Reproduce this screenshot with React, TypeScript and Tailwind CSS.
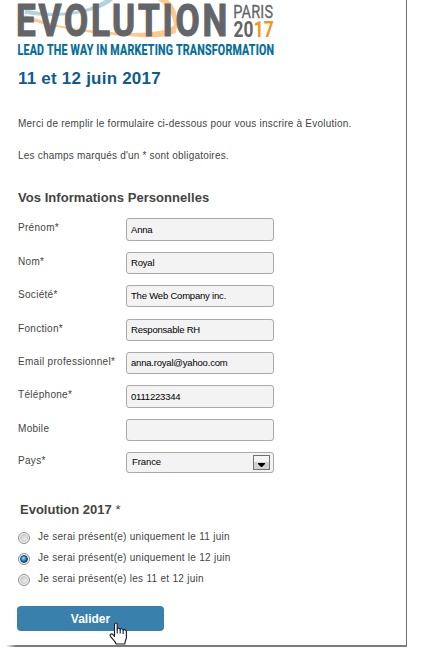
import React from 'react';

const fields = [
  { label: 'Prénom*', value: 'Anna', row: 'h-[34px]', box: 'h-[23px]' },
  { label: 'Nom*', value: 'Royal', row: 'h-[33px]', box: 'h-[22px]' },
  { label: 'Société*', value: 'The Web Company inc.', row: 'h-[34px]', box: 'h-[22px]' },
  { label: 'Fonction*', value: 'Responsable RH', row: 'h-[33px]', box: 'h-[22px]' },
  { label: 'Email professionnel*', value: 'anna.royal@yahoo.com', row: 'h-[33px]', box: 'h-[22px]' },
  { label: 'Téléphone*', value: '0111223344', row: 'h-[34px]', box: 'h-[23px]' },
  { label: 'Mobile', value: '', row: 'h-[33px]', box: 'h-[22px]' },
];

const options = [
  { text: 'Je serai présent(e) uniquement le 11 juin', checked: false },
  { text: 'Je serai présent(e) uniquement le 12 juin', checked: true },
  { text: 'Je serai présent(e) les 11 et 12 juin', checked: false },
];

function Logo() {
  return (
    <svg width="300" height="60" viewBox="0 0 300 60" className="block" fontFamily="'Roboto', 'Liberation Sans', sans-serif">
      <path d="M25 9 C50 16 85 14 105 0 L113 0 C108 5 97 10 86 12 C66 17 45 17 25 14 Z" fill="#b4d2e0" />
      <path
        d="M25 15 C45 22 62 27 84 29.5 C110 33 135 34 152 32 C162 31 170 29 174 25 C173 14 167 6 158 0 L168 0 C178 9 179 22 175.5 33 C165 38 150 38 135 36.5 C110 35 85 33 62 28 C48 25 35 22 25 20 Z"
        fill="#fdc88d"
      />
      <text
        transform="translate(16 36.4) scale(.78 1)"
        fontSize="45"
        fontWeight="700"
        fill="#636569"
        stroke="#636569"
        strokeWidth="1.2"
        textLength="271"
        lengthAdjust="spacing"
      >
        EVOLUTION
      </text>
      <text x="233.2" y="17.5" fontSize="18.5" fill="#636569" stroke="#636569" strokeWidth=".3" textLength="40" lengthAdjust="spacingAndGlyphs">PARIS</text>
      <text x="233.5" y="36.7" fontSize="21.5" fontWeight="700" fill="#636569" textLength="40.5" lengthAdjust="spacingAndGlyphs">
        20<tspan fill="#f7941e">17</tspan>
      </text>
      <text transform="translate(17.5 54.7) scale(.77 1)" fontSize="13.8" fontWeight="700" fill="#006c9b" stroke="#006c9b" strokeWidth=".25" textLength="333.5" lengthAdjust="spacing">
        LEAD THE WAY IN MARKETING TRANSFORMATION
      </text>
    </svg>
  );
}

function Radio({ checked }: { checked: boolean }) {
  return (
    <span className="flex size-3 shrink-0 items-center justify-center rounded-full border border-[#8e8f8f] bg-[#f4f4f4]">
      <span
        className={
          checked
            ? 'size-2 rounded-full border border-[#173f5c] bg-[radial-gradient(circle_at_40%_35%,#9be0f8,#1b82b8_50%,#0b3c61)]'
            : 'size-2 rounded-full border border-[#c3c5c9] bg-[linear-gradient(135deg,#c8cbd0,#f5f5f5)]'
        }
      />
    </span>
  );
}

function Cursor() {
  return (
    <svg className="absolute left-[92px] top-[16px]" width="19" height="23" viewBox="0 0 19 23">
      <path
        d="M5.5 14.5 V2.4 C5.5 .5 8.2 .5 8.2 2.4 V7.6 C8.2 5.8 11.2 5.8 11.2 7.8 C11.4 6.2 14.2 6.5 14.2 8.5 C14.6 7.1 17.4 7.6 17.4 9.6 V15.5 C17.4 17.6 15.8 18.6 15.8 22 H7.2 C6.6 19.4 4.3 18 1.5 14.4 C.2 12.5 2.3 11 3.9 12.5 Z"
        fill="#fff"
        stroke="#1c1c28"
        strokeWidth="1.15"
        strokeLinejoin="round"
      />
      <path d="M8.2 7.6V11.5M11.2 7.8V11.5M14.2 8.6V12" stroke="#1c1c28" strokeWidth="1.1" />
    </svg>
  );
}

export default function App() {
  return (
    <div className="h-[660px] w-[421px] overflow-hidden bg-white font-['Liberation_Sans',Arial,sans-serif] text-[10px] tracking-[0.23px] text-[#444]">
      <div className="relative h-[647px] w-[407px] border-r border-[#6f6f6f]">
        <Logo />
        <div className="pl-[18px]">
          <h1 className="mt-[9px] h-5 whitespace-nowrap text-[17px] font-bold leading-5 tracking-[0.22px] text-[#0f5a94]">11 et 12 juin 2017</h1>
          <p className="mt-[29px] whitespace-nowrap leading-3">
            Merci de remplir le formulaire ci-dessous pour vous inscrire à Evolution.
          </p>
          <p className="mt-5 whitespace-nowrap leading-3 tracking-[0.2px]">Les champs marqués d'un * sont obligatoires.</p>
          <h2 className="mt-[28px] h-4 whitespace-nowrap text-[13px] font-bold leading-4 tracking-[0.05px]">Vos Informations Personnelles</h2>

          <div className="mt-[12px]">
            {fields.map((f) => (
              <div key={f.label} className={`flex items-start ${f.row}`}>
                <label className="w-[108px] shrink-0 whitespace-nowrap pt-1 leading-3 tracking-[0.3px]">{f.label}</label>
                <div className={`flex w-[148px] items-center rounded-[3px] border border-[#a9a9a9] bg-[#f3f3f3] pl-1 pt-px text-[9.5px] tracking-[-0.2px] text-black ${f.box}`}>
                  <span className="whitespace-nowrap">{f.value}</span>
                </div>
              </div>
            ))}
            <div className="flex h-[50px] items-start">
              <label className="w-[108px] shrink-0 pt-[3px] leading-3 tracking-[0.3px]">Pays*</label>
              <div className="flex h-[21px] w-[148px] items-center justify-between rounded-[3px] border border-[#a9a9a9] bg-[#f3f3f3] pl-[5px] pr-[3px] text-[9.5px] tracking-[-0.1px] text-black">
                <span>France</span>
                <span className="flex h-[15px] w-[17px] items-end justify-center border border-[#707070] bg-[linear-gradient(#f4f4f4_45%,#d2d2d2_46%)] pb-[2px]">
                  <svg width="7" height="4" viewBox="0 0 7 4"><path d="M0 0H7V1L4 4H3L0 1Z" fill="#000" /></svg>
                </span>
              </div>
            </div>
          </div>

          <h2 className="ml-[2px] h-4 whitespace-nowrap text-[13px] font-bold leading-4 tracking-normal">Evolution 2017 <span className="font-normal">*</span></h2>
          <div className="mt-[9px]">
            {options.map((o) => (
              <div key={o.text} className="flex h-[21px] items-center gap-2">
                <Radio checked={o.checked} />
                <span className="whitespace-nowrap pb-px leading-3 tracking-[0.28px]">{o.text}</span>
              </div>
            ))}
          </div>
        </div>
        <div className="relative ml-[17px] mt-4 w-[147px]">
          <button className="flex h-[25px] w-full items-center justify-center rounded-[4px] bg-[#3a80ad] text-[12px] font-bold tracking-normal text-white">Valider</button>
          <Cursor />
        </div>
        <div className="absolute bottom-0 left-[6px] right-[-1px] h-[2px] bg-[linear-gradient(to_right,transparent,#7b7b7b_10px)]" />
      </div>
    </div>
  );
}
